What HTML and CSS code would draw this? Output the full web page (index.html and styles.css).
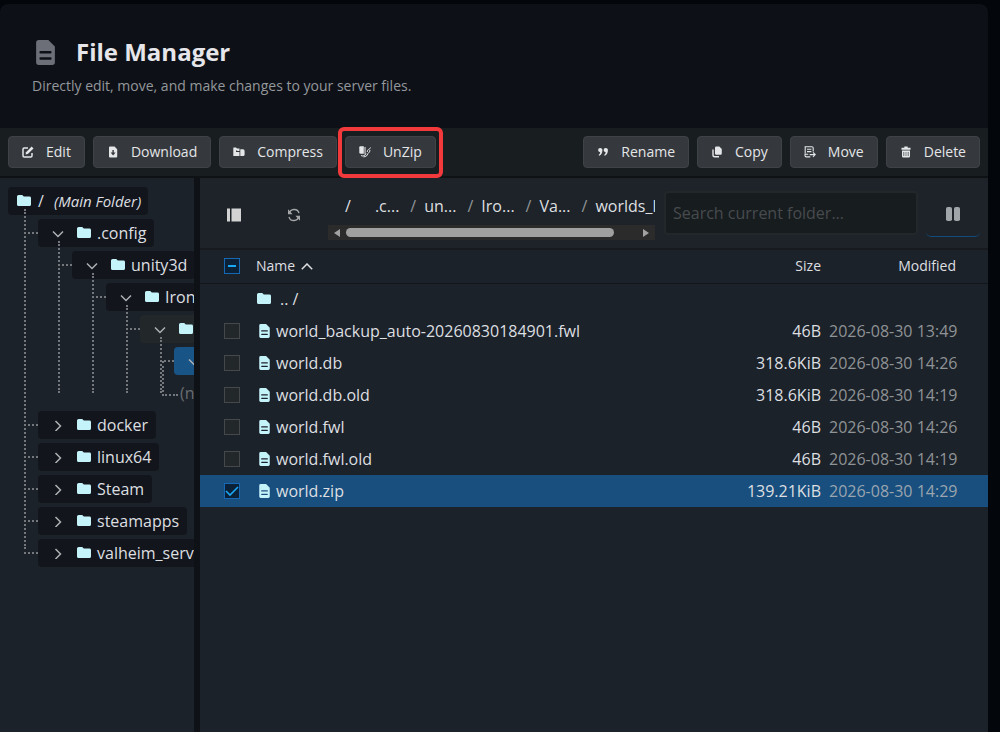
FILE: index.html
```html
<!DOCTYPE html>
<html lang="en">
<head>
<meta charset="utf-8">
<title>File Manager</title>
<link rel="stylesheet" href="styles.css">
</head>
<body>
<svg class="sprite" aria-hidden="true">
  <symbol id="folder" viewBox="0 0 14 12"><path d="M1.6 0H5.2L6.8 1.6H12.4Q14 1.6 14 3V9.5Q14 11 12.4 11H1.6Q0 11 0 9.5V1.5Q0 0 1.6 0Z"/></symbol>
  <symbol id="file" viewBox="0 0 12 16"><path fill-rule="evenodd" d="M1.7 0H7.8L12 4.2V14.3Q12 16 10.3 16H1.7Q0 16 0 14.3V1.7Q0 0 1.7 0ZM2.8 7.1Q2.1 7.1 2.1 7.9T2.8 8.7H9.2Q9.9 8.7 9.9 7.9T9.2 7.1ZM2.8 11Q2.1 11 2.1 11.8T2.8 12.6H9.2Q9.9 12.6 9.9 11.8T9.2 11Z"/></symbol>
  <symbol id="down" viewBox="0 0 12 12"><path d="M1 4.5 6 9.5 11 4.5" fill="none" stroke="currentColor" stroke-width="1.5"/></symbol>
  <symbol id="right" viewBox="0 0 12 12"><path d="M3.5 2 8.5 7 3.5 12" fill="none" stroke="currentColor" stroke-width="1.5"/></symbol>
</svg>
<div class="app">
  <header class="hero">
    <h1><svg class="hero-icon"><use href="#file"/></svg>File Manager</h1>
    <p>Directly edit, move, and make changes to your server files.</p>
  </header>
  <div class="toolbar">
    <div class="group">
      <button class="btn"><svg viewBox="0 0 12 12"><path d="M6 2H2.2Q1 2 1 3.2V9.8Q1 11 2.2 11H8.8Q10 11 10 9.8V7" fill="none" stroke="currentColor" stroke-width="1.5"/><path d="M4 6.3 9.7.6 11.5 2.4 5.8 8.1 3.7 8.4Z"/></svg>Edit</button>
      <button class="btn"><svg viewBox="0 0 12 12"><path fill-rule="evenodd" d="M3 .5H7.5L10.2 3.3V10.5Q10.2 11.5 9.2 11.5H3Q2 11.5 2 10.5V1.5Q2 .5 3 .5ZM5.4 4V6.5H3.6L6.1 9.4 8.6 6.5H6.8V4Z"/></svg>Download</button>
      <button class="btn"><svg viewBox="0 0 12 12"><path fill-rule="evenodd" d="M.7 1.5H3L4 2.5H6.5V5H4.2V4.4H3V6H6.5V10H.7Q.3 10 .3 9.5V2Q.3 1.5 .7 1.5Z"/><path d="M7.3 3.3H10Q11.6 3.3 11.6 5V8.5Q11.6 10 10 10H7.3Z"/></svg>Compress</button>
      <button class="btn marked"><svg viewBox="0 0 12 12"><path d="M.3 1.3Q.3.3 1.3.3H4.8V7.8H1.8Q.3 7.8 .3 6.3Z"/><path d="M5.3 1H6.8V8H5.3Z" opacity=".7"/><path d="M2 9.5Q4 11 6 9L7 7.5M11.5 1.5Q11 3 9.5 3.5T8.3 6M11 4Q11 6 9 7.5L7.5 10 4.5 11" fill="none" stroke="currentColor" stroke-width="1"/></svg>UnZip</button>
    </div>
    <div class="group">
      <button class="btn"><svg viewBox="0 0 12 12"><path d="M3.2 2A2.1 2.1 0 0 1 5.4 4.5Q5.3 8.3 2.2 9.8L1.6 9Q3.1 8 3.2 6.2A2.1 2.1 0 0 1 3.2 2ZM8.7 2A2.1 2.1 0 0 1 10.9 4.5Q10.8 8.3 7.7 9.8L7.1 9Q8.6 8 8.7 6.2A2.1 2.1 0 0 1 8.7 2Z"/></svg>Rename</button>
      <button class="btn"><svg viewBox="0 0 12 12"><path d="M5.2.5H8.3L10.8 3V7.5Q10.8 8.7 9.6 8.7H5.2Q4 8.7 4 7.5V1.7Q4 .5 5.2.5Z"/><path d="M2 3.5V9Q2 10.8 3.8 10.8H8" fill="none" stroke="currentColor" stroke-width="1.4"/></svg>Copy</button>
      <button class="btn"><svg viewBox="0 0 12 12"><path d="M9.2 5.5V2Q9.2.7 7.9.7H1.2V7.5M1 7.8V9.6Q1 10.9 2.3 10.9H6.3M.7 8.2H4.2M3 3.2H7.4M3 5.6H7.4M5.6 8.6H11.2M9 6.4 11.2 8.6 9 10.8" fill="none" stroke="currentColor" stroke-width="1.1"/></svg>Move</button>
      <button class="btn"><svg viewBox="0 0 12 12"><path fill-rule="evenodd" d="M4.3.5H7.7V1.8H10.5V3.7H1.5V1.8H4.3ZM2 4.6H10V10.2Q10 11.5 8.7 11.5H3.3Q2 11.5 2 10.2ZM3.5 6V10H4.2V6ZM5.7 6V10H6.3V6ZM7.8 6V10H8.5V6Z"/></svg>Delete</button>
    </div>
  </div>
  <main class="panes">
    <nav class="tree" aria-label="Folders">
      <a class="node root" href="#"><svg class="folder"><use href="#folder"/></svg><span>/</span><em>(Main Folder)</em></a>
      <ul class="top">
        <li><a class="node" href="#"><svg class="chev"><use href="#down"/></svg><svg class="folder"><use href="#folder"/></svg>.config</a>
          <ul><li><a class="node" href="#"><svg class="chev"><use href="#down"/></svg><svg class="folder"><use href="#folder"/></svg>unity3d</a>
            <ul><li><a class="node" href="#"><svg class="chev"><use href="#down"/></svg><svg class="folder"><use href="#folder"/></svg>IronGate</a>
              <ul><li><a class="node hover" href="#" aria-label="Valheim"><svg class="chev"><use href="#down"/></svg><svg class="folder"><use href="#folder"/></svg></a>
                <ul><li><a class="node current" href="#" aria-label="worlds_local"><svg class="chev"><use href="#down"/></svg><svg class="folder"><use href="#folder"/></svg></a>
                  <div class="empty">(none)</div></li></ul>
              </li></ul>
            </li></ul>
          </li></ul>
        </li>
        <li><a class="node" href="#"><svg class="chev"><use href="#right"/></svg><svg class="folder"><use href="#folder"/></svg>docker</a></li>
        <li><a class="node" href="#"><svg class="chev"><use href="#right"/></svg><svg class="folder"><use href="#folder"/></svg>linux64</a></li>
        <li><a class="node" href="#"><svg class="chev"><use href="#right"/></svg><svg class="folder"><use href="#folder"/></svg>Steam</a></li>
        <li><a class="node" href="#"><svg class="chev"><use href="#right"/></svg><svg class="folder"><use href="#folder"/></svg>steamapps</a></li>
        <li><a class="node" href="#"><svg class="chev"><use href="#right"/></svg><svg class="folder"><use href="#folder"/></svg>valheim_server</a></li>
      </ul>
    </nav>
    <section class="files">
      <div class="bar">
        <button class="icon-btn" aria-label="Toggle sidebar"><svg viewBox="0 0 14 13"><path d="M0 0H3V13H0ZM4.5 0H14V13H4.5Z"/></svg></button>
        <button class="icon-btn refresh" aria-label="Refresh"><svg viewBox="0 0 14 14"><path d="M2.2 5.8A5 5 0 0 1 12 5.2M11.8 8.2A5 5 0 0 1 2 8.8" fill="none" stroke="currentColor" stroke-width="1.4"/><path d="M1 1.3V6.2H5.6ZM13 12.7V7.8H8.4Z"/></svg></button>
        <div class="crumbs">
          <div class="trail"><a class="first" href="#">/</a><a href="#">.c...</a><i>/</i><a href="#">un...</a><i>/</i><a href="#">Iro...</a><i>/</i><a href="#">Va...</a><i>/</i><a href="#">worlds_local</a></div>
          <div class="scroll"><svg viewBox="0 0 6 8"><path d="M6 0V8L0 4Z"/></svg><div class="track"><div class="thumb"></div></div><svg viewBox="0 0 6 8"><path d="M0 0V8L6 4Z"/></svg></div>
        </div>
        <input class="search" type="text" placeholder="Search current folder..." aria-label="Search current folder">
        <button class="split" aria-label="Split view"><svg viewBox="0 0 14 14"><rect width="6" height="14" rx="1.8"/><rect x="8" width="6" height="14" rx="1.8"/></svg></button>
      </div>
      <table>
        <thead><tr><th class="c"><input class="mixed" type="checkbox" aria-label="Select all"></th><th class="n">Name <svg class="sort" viewBox="0 0 12 7"><path d="M.8 6.3 6 1 11.2 6.3" fill="none" stroke="currentColor" stroke-width="1.5"/></svg></th><th class="s">Size</th><th class="m">Modified</th></tr></thead>
        <tbody>
          <tr><td class="c"></td><td class="n"><div class="up"><svg class="folder"><use href="#folder"/></svg>.. /</div></td><td class="s"></td><td class="m"></td></tr>
          <tr><td class="c"><input id="f1" type="checkbox"></td><td class="n"><label for="f1"><svg class="file"><use href="#file"/></svg>world_backup_auto-20260830184901.fwl</label></td><td class="s">46B</td><td class="m">2026-08-30 13:49</td></tr>
          <tr><td class="c"><input id="f2" type="checkbox"></td><td class="n"><label for="f2"><svg class="file"><use href="#file"/></svg>world.db</label></td><td class="s">318.6KiB</td><td class="m">2026-08-30 14:26</td></tr>
          <tr><td class="c"><input id="f3" type="checkbox"></td><td class="n"><label for="f3"><svg class="file"><use href="#file"/></svg>world.db.old</label></td><td class="s">318.6KiB</td><td class="m">2026-08-30 14:19</td></tr>
          <tr><td class="c"><input id="f4" type="checkbox"></td><td class="n"><label for="f4"><svg class="file"><use href="#file"/></svg>world.fwl</label></td><td class="s">46B</td><td class="m">2026-08-30 14:26</td></tr>
          <tr><td class="c"><input id="f5" type="checkbox"></td><td class="n"><label for="f5"><svg class="file"><use href="#file"/></svg>world.fwl.old</label></td><td class="s">46B</td><td class="m">2026-08-30 14:19</td></tr>
          <tr class="selected"><td class="c"><span class="box"><input id="f6" type="checkbox" checked><svg viewBox="0 0 16 16"><path d="M2 8 6 12 14 4" fill="none" stroke="currentColor" stroke-width="1.6"/></svg></span></td><td class="n"><label for="f6"><svg class="file"><use href="#file"/></svg>world.zip</label></td><td class="s">139.21KiB</td><td class="m">2026-08-30 14:29</td></tr>
        </tbody>
      </table>
    </section>
  </main>
</div>
</body>
</html>
```
FILE: styles.css
```css
* { box-sizing: border-box; }
body {
  margin: 0;
  background: #03060b;
  color: #dddfe1;
  font: 16px/24px "Open Sans", "Noto Sans", sans-serif;
}
svg { display: block; flex: none; fill: currentColor; }
.sprite { display: none; }
a { color: inherit; text-decoration: none; }
button, input { font: inherit; color: inherit; margin: 0; }
button { border: 0; background: none; padding: 0; }

.app { display: flex; flex-direction: column; min-height: 100vh; padding: 4px 12px 0 0; }

.hero { padding: 32px 32px 30px; background: #0d1117; border-radius: 8px 8px 0 0; }
.hero h1 { display: flex; align-items: center; gap: 21px; margin: 0; padding-left: 4px; font-size: 24px; line-height: 32px; font-weight: 700; color: #e6e6ea; }
.hero-icon { width: 19px; height: 25px; color: #6c6f78; }
.hero p { margin: 6px 0 0; font-size: 14px; line-height: 24px; color: #94979b; }

.toolbar { display: flex; justify-content: space-between; padding: 8px; background: #181d20; border-bottom: 2px solid #0e1215; }
.group { display: flex; gap: 8px; }
.btn {
  position: relative;
  display: flex;
  align-items: center;
  gap: 12px;
  height: 32px;
  padding: 0 13px;
  border: 1px solid #3f4347;
  border-radius: 4px;
  background: #35383d;
  font-size: 14px;
  line-height: 20px;
  color: #e4e6e8;
}
.btn svg { width: 12px; height: 12px; }
.marked::after { content: ""; position: absolute; inset: -10px -8px -11px -8px; border: 4px solid #f23a3c; border-radius: 6px; }

.panes { flex: 1; display: grid; grid-template-columns: 194px 1fr; gap: 6px; background: #0e1217; }
.tree { padding: 9px 0 0 8px; overflow: hidden; background: #1c2229; white-space: nowrap; }
.tree ul { position: relative; margin: 0; padding: 0 0 0 34px; list-style: none; }
.tree .top { padding-left: 30px; }
.tree li { position: relative; }
.tree ul::before { content: ""; position: absolute; left: 20px; top: -10px; bottom: 18px; border-left: 2px dotted #74777b; }
.tree .top::before { left: 16px; }
.tree li::before { content: ""; position: absolute; left: -14px; top: 13px; width: 14px; border-top: 2px dotted #74777b; }
.node { display: flex; align-items: center; width: max-content; height: 28px; margin-bottom: 4px; padding: 0 8px 0 14px; border-radius: 4px; background: #12161c; }
.root { padding: 0 7px 0 9px; gap: 7px; }
.root em { margin-left: 3px; font-size: 15px; }
.hover, .current { min-width: 120px; }
.hover { background: #222829; }
.current { background: #195487; }
.folder { width: 14px; height: 12px; color: #c5f3fa; }
.node .chev { width: 12px; height: 12px; margin-right: 13px; color: #aeb1b4; }
.node .chev + .folder { margin-right: 6px; }
.empty { position: relative; height: 32px; padding-left: 6px; line-height: 28px; color: #686c70; }
.empty::before { content: ""; position: absolute; left: -12px; top: -18px; width: 14px; height: 33px; border: dotted #74777b; border-width: 0 0 2px 2px; }

.files { min-width: 0; background: #1c2229; }
.bar { display: flex; align-items: center; height: 72px; padding-right: 8px; border-bottom: 2px solid #171b20; background: #1d2328; }
.icon-btn { display: grid; place-items: center; flex: none; width: 60px; height: 48px; padding: 3px 0 0 8px; color: #d3d3d3; }
.icon-btn svg { width: 14px; height: 14px; }
.refresh { padding-left: 7px; color: #a4a6a8; }
.crumbs { flex: 1; min-width: 0; margin: 0 9px 0 8px; padding-top: 4px; overflow: hidden; }
.trail { display: flex; align-items: center; height: 32px; padding-left: 17px; margin-bottom: 3px; white-space: nowrap; overflow: hidden; }
.trail a { padding-right: 11px; }
.trail .first { padding-right: 24px; }
.trail i { padding-right: 8px; font-style: normal; color: #909396; }
.scroll { display: flex; align-items: center; gap: 6px; height: 15px; padding: 0 6px; background: #2b2b2b; color: #a2a2a2; }
.scroll svg { width: 6px; height: 8px; }
.track { flex: 1; }
.thumb { width: 92%; height: 9px; border-radius: 5px; background: #a0a0a0; }
.search { flex: none; width: 254px; height: 44px; padding: 0 7px; border: 2px solid #22282a; border-radius: 4px; background: #171c1f; outline: 0; }
.search::placeholder { color: #474b4e; opacity: 1; }
.split { display: grid; place-items: center; flex: none; width: 54px; height: 46px; margin: 2px 0 0 8px; border-bottom: 1px solid #124a7c; border-radius: 5px; color: #a0a5a9; }
.split svg { width: 14px; height: 14px; }

table { width: 100%; table-layout: fixed; border-collapse: collapse; }
tr { height: 32px; }
th, td { padding: 0; text-align: left; font-weight: 400; white-space: nowrap; }
thead tr { height: 33px; border-bottom: 1px solid #12161a; font-size: 14px; }
.c { width: 56px; padding-left: 24px; }
.s { width: 130px; text-align: right; }
.m { width: 167px; padding-left: 8px; color: #8f9396; }
th.m { padding-right: 32px; text-align: right; color: #dddfe1; }
.n label, .n .up { display: flex; align-items: center; gap: 6px; }
.n .up { gap: 9px; }
.n .folder { margin-left: 1px; }
.n label { padding-left: 3px; }
.file { width: 11px; height: 14px; color: #c5f3fa; }
.sort { display: inline-block; width: 12px; height: 7px; margin-left: 2px; vertical-align: 1px; }
.selected { background: #184f7e; }
.selected .m { color: #9aa5af; }
.c input { display: block; appearance: none; width: 16px; height: 16px; border: 1px solid #44484b; background: #22282a; }
.c .mixed { border-color: #1668b5; background: linear-gradient(#18a8f5, #18a8f5) center / 8px 2px no-repeat #0b2138; }
.box { display: grid; width: 16px; color: #18a8f5; }
.box > * { grid-area: 1 / 1; }
.box input { border-color: #1668b5; background: #0b2138; }
.box svg { z-index: 1; pointer-events: none; }
```
